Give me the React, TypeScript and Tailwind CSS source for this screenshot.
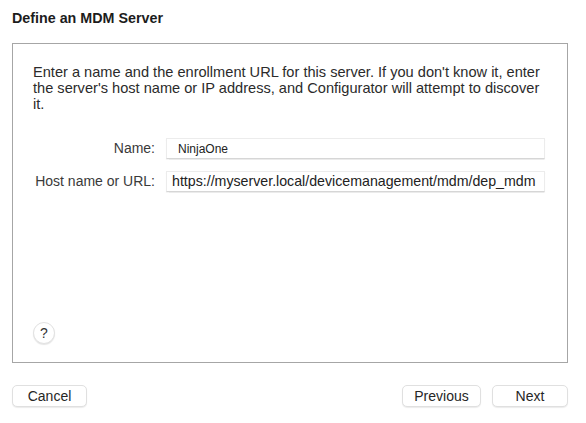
export default function App() {
  return (
    <div
      className="w-[586px] h-[423px] bg-white px-3 pt-[10px] text-[#262626]"
      style={{ fontFamily: '"Liberation Sans", Arial, sans-serif' }}
    >
      {/* Title */}
      <h1 className="text-[14.3px] leading-4 font-bold text-[#1c1c1c]">Define an MDM Server</h1>

      {/* Main panel */}
      <div className="mt-[17px] w-[556px] h-[320px] border border-[#a6a6a6] flex flex-col pl-5 pr-[22px] pt-5 pb-[18px]">
        <p className="text-[14.6px] leading-4 text-[#2b2b2b] whitespace-nowrap">
          Enter a name and the enrollment URL for this server. If you don't know it, enter
          <br />
          the server's host name or IP address, and Configurator will attempt to discover
          <br />
          it.
        </p>

        <div className="mt-[26px] grid grid-cols-[122px_1fr] gap-x-[11px] gap-y-3 items-center">
          <label className="text-right text-[14px] text-[#3a3a3a]">Name:</label>
          <div className="h-[21px] bg-white border border-[#ececec] border-b-[#d6d6d6] shadow-[0_0.5px_1px_rgba(0,0,0,0.08)] flex items-center pl-[11px] text-[12px] text-[#222]">
            NinjaOne
          </div>
          <label className="text-right text-[14px] text-[#3a3a3a] whitespace-nowrap">Host name or URL:</label>
          <div className="h-[21px] bg-white border border-[#ececec] border-b-[#d6d6d6] shadow-[0_0.5px_1px_rgba(0,0,0,0.08)] flex items-center pl-[5px] pr-[2px] text-[14.2px] text-[#222] overflow-hidden whitespace-nowrap">
            https://myserver.local/devicemanagement/mdm/dep_mdm
          </div>
        </div>

        <div className="flex-1" />

        <button className="w-[22px] h-[22px] rounded-full bg-white border border-[#e2e2e2] shadow-[0_1px_1px_rgba(0,0,0,0.1)] flex items-center justify-center text-[14px] text-[#333]">
          ?
        </button>
      </div>

      {/* Footer buttons */}
      <div className="mt-[22px] w-[556px] flex items-center">
        <button className="w-[75px] h-[22px] rounded-[5px] bg-white border border-[#e0e0e0] shadow-[0_1px_1px_rgba(0,0,0,0.08)] text-[14px] text-[#262626]">
          Cancel
        </button>
        <div className="flex-1" />
        <div className="flex gap-[11px]">
          <button className="w-[79px] h-[22px] rounded-[5px] bg-white border border-[#e0e0e0] shadow-[0_1px_1px_rgba(0,0,0,0.08)] text-[14px] text-[#262626]">
            Previous
          </button>
          <button className="w-[76px] h-[22px] rounded-[5px] bg-white border border-[#e0e0e0] shadow-[0_1px_1px_rgba(0,0,0,0.08)] text-[14px] text-[#262626]">
            Next
          </button>
        </div>
      </div>
    </div>
  );
}
